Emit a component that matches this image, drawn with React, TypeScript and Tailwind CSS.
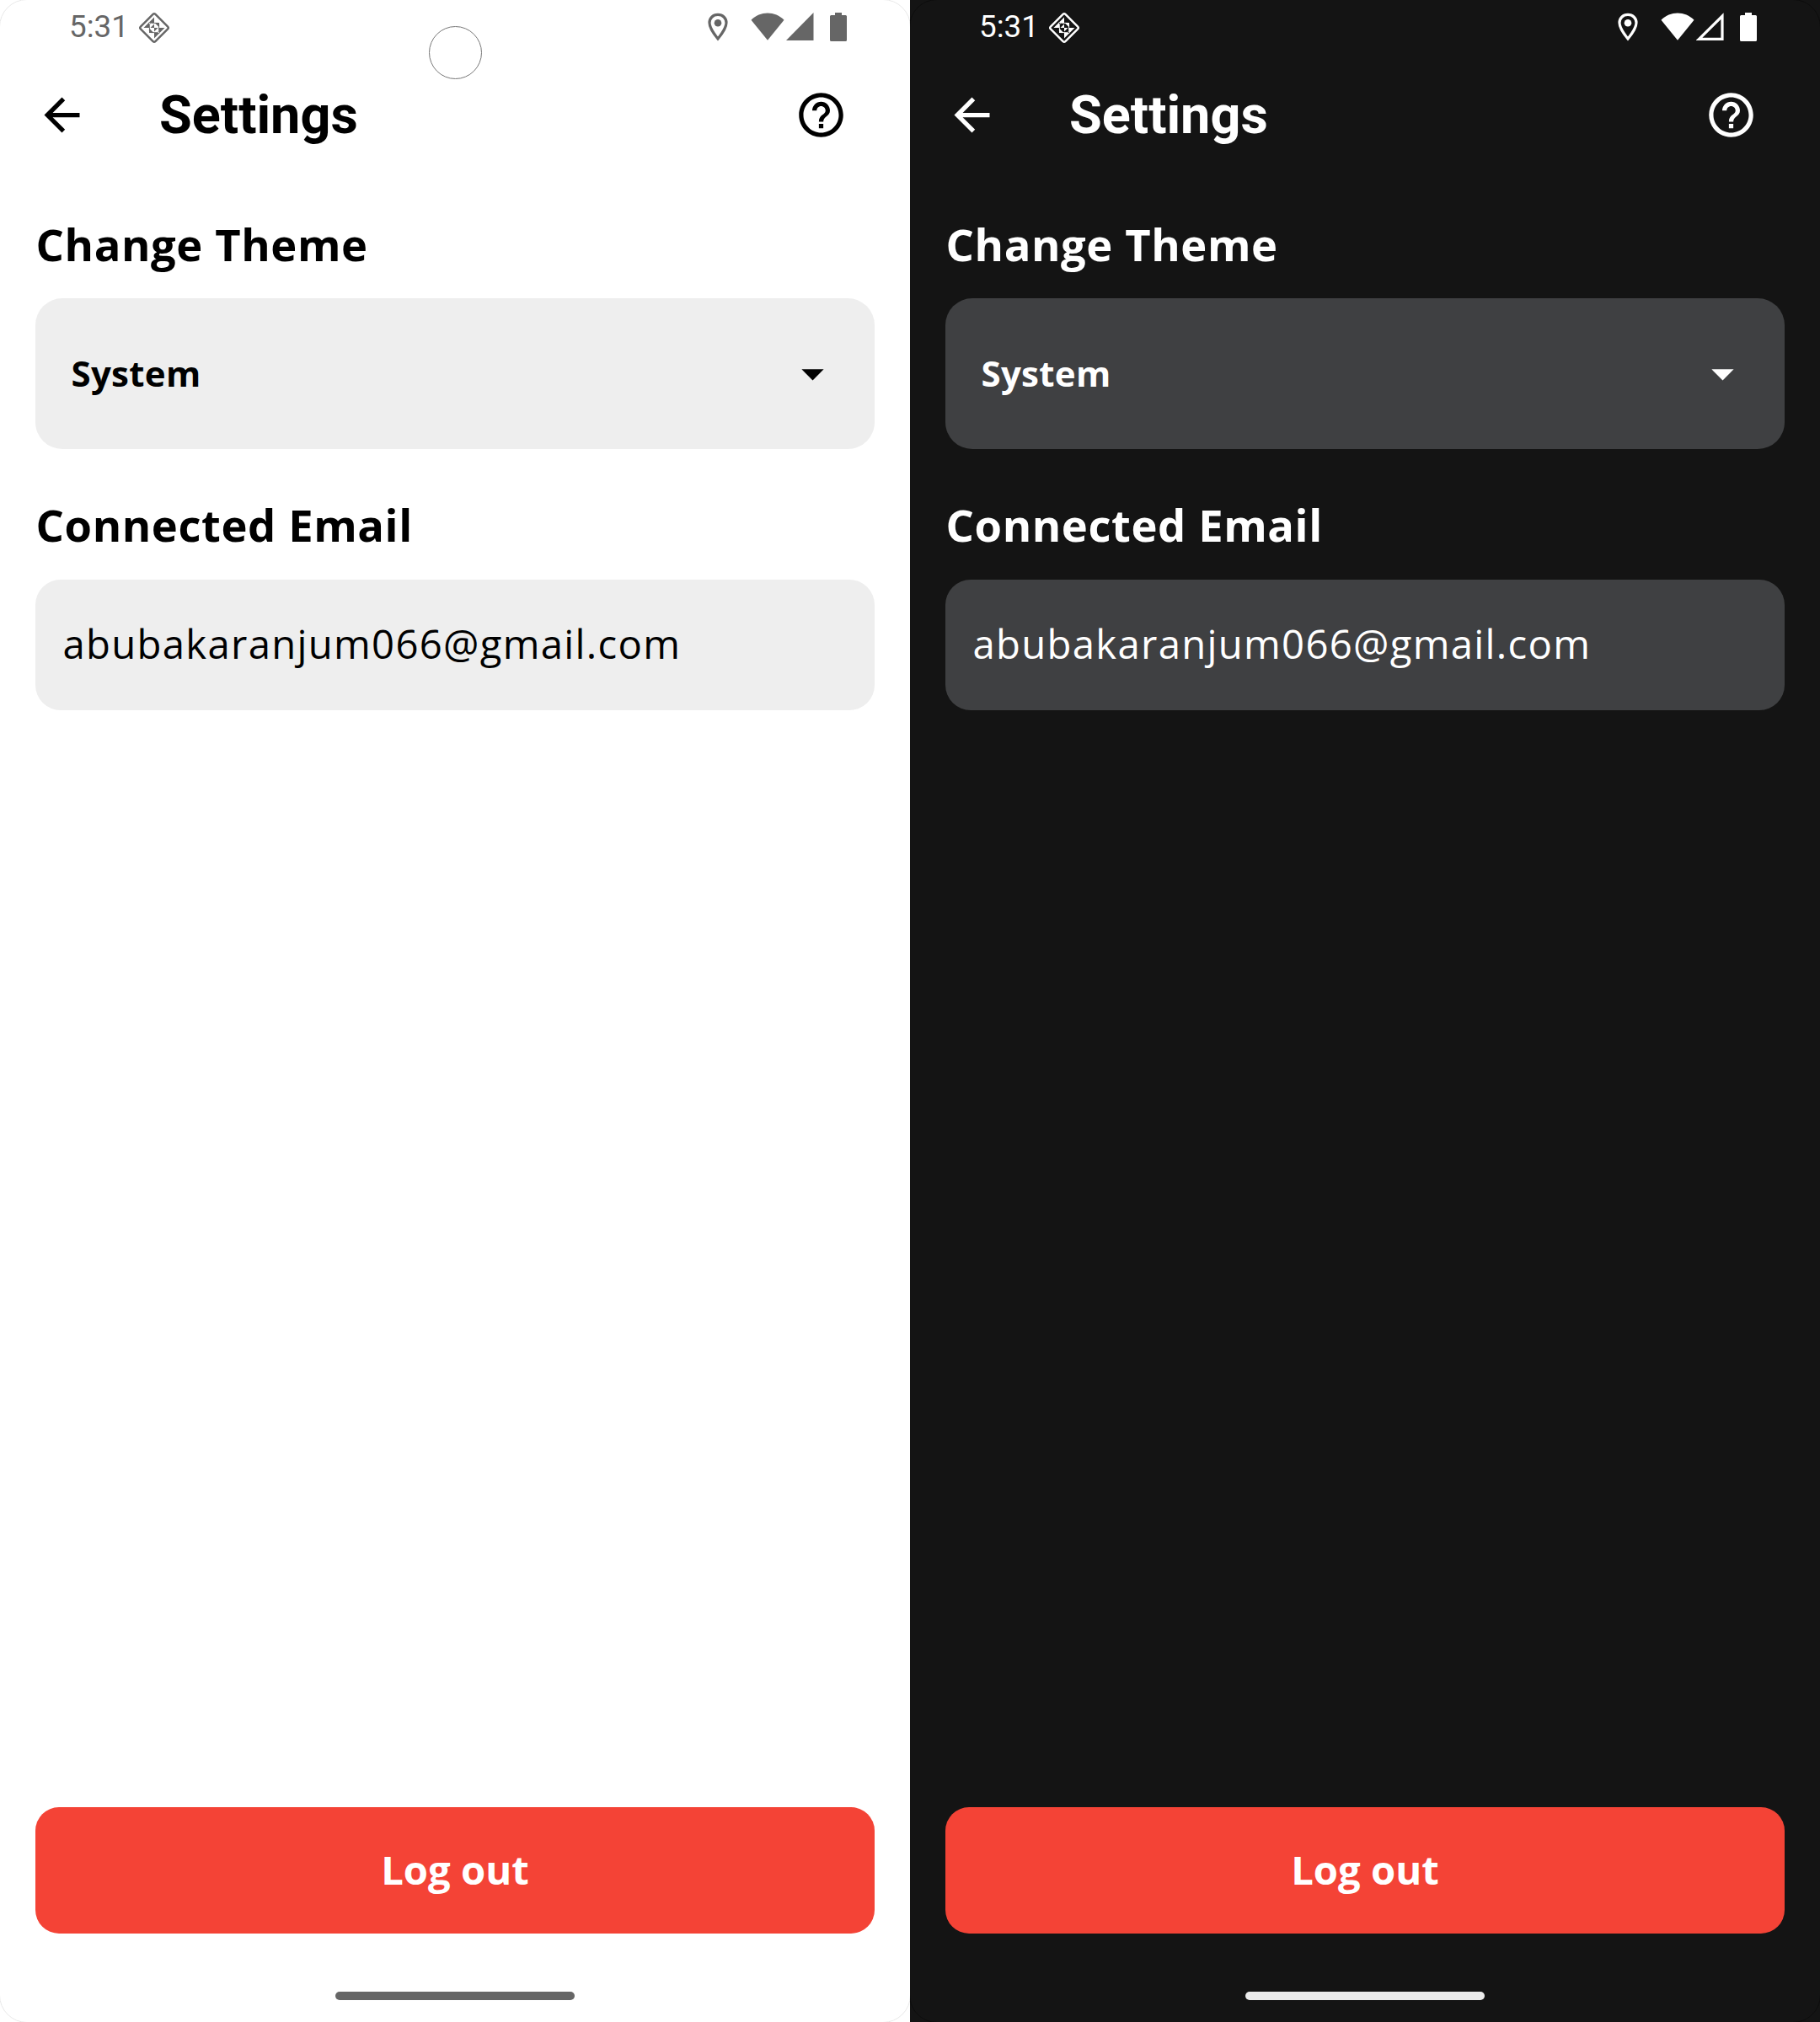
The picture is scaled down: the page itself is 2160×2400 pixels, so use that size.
import { useState } from "react";

type Theme = "light" | "dark";

function DebugIcon() {
  return (
    <svg viewBox="0 0 38 38" className="h-[38px] w-[38px]" fill="none">
      <rect x="6.600" y="6.600" width="24.800" height="24.800" rx="2" transform="rotate(45 19 19)" stroke="currentColor" strokeWidth="2.400" />
      <g fill="currentColor">
        <path d="M19 6.500V13H12.500Z" />
        <path d="M19 31.500V25H25.500Z" />
        <path d="M6.500 19H13V12.500Z" />
        <path d="M31.500 19H25V25.500Z" />
        <path d="M19.500 13H25V18.500Z" />
        <path d="M13 19.500V25H18.500Z" />
        <path d="M19 19H14.500L19 14.500Z" />
        <path d="M19 19H23.500L19 23.500Z" />
      </g>
      <rect x="13.400" y="13.400" width="11.200" height="11.200" rx="2" stroke="currentColor" strokeWidth="0.900" />
    </svg>
  );
}

function LocationIcon() {
  return (
    <svg viewBox="0 0 24 34" className="h-[34px] w-[24px]" fill="none">
      <path d="M12 2.400C6 2.400 2 6.800 2 12C2 19 12 31 12 31C12 31 22 19 22 12C22 6.800 18 2.400 12 2.400Z" stroke="currentColor" strokeWidth="3.200" />
      <circle cx="12" cy="12.200" r="4.300" fill="currentColor" />
    </svg>
  );
}

function StatusBar({ theme }: { theme: Theme }) {
  return (
    <div className={"flex h-[63px] items-start pl-[82px] " + (theme === "light" ? "text-[#666666]" : "text-white")}>
      <span className="mt-[10px] w-[72px] font-[Roboto] text-[36.750px] leading-[43px]">5:31</span>
      <div className="ml-[10px] mt-[13.500px]">
        <DebugIcon />
      </div>
      <div className="mt-[15px] flex pl-[638px]">
        <LocationIcon />
        <svg viewBox="0 0 40 33" className="ml-[26.500px] h-[33px] w-[40px]" fill="currentColor">
          <path d="M0.500 8.800C11-2.200 29-2.200 39.500 8.800L20 32.800Z" />
        </svg>
        <svg viewBox="0 0 33 33" className="ml-[2.500px] h-[33px] w-[33px]">
          {theme === "light" ? (
            <path d="M0 33L32.500 0V33Z" fill="currentColor" />
          ) : (
            <path d="M3.500 31.300L31 4V31.300Z" fill="none" stroke="currentColor" strokeWidth="3.200" />
          )}
        </svg>
        <svg viewBox="0 0 20 34" className="ml-[19px] h-[34px] w-[20px]" fill="currentColor">
          <path d="M6 0H14V3H18.500Q20 3 20 4.500V32.500Q20 34 18.500 34H1.500Q0 34 0 32.500V4.500Q0 3 1.500 3H6Z" />
        </svg>
      </div>
    </div>
  );
}

function Phone({ theme }: { theme: Theme }) {
  const [email] = useState("abubakaranjum066@gmail.com");
  const light = theme === "light";
  const card = light ? "bg-[#eeeeee]" : "bg-[#3f4042]";
  return (
    <section className={"relative flex h-[2400px] w-[1080px] flex-col overflow-hidden " + (light ? "bg-white text-black" : "bg-[#141414] text-white")}>
      {/* display corner outline; the straight edges fall outside the clipped area */}
      <div className={"pointer-events-none absolute -inset-px rounded-[33px] border " + (light ? "border-[#e9e9e9]" : "border-[#0d0d0d]")} />
      {/* front camera cutout */}
      {light && <div className="absolute left-[509px] top-[31px] h-[63px] w-[63px] rounded-full border border-[#777777]" />}
      <StatusBar theme={theme} />
      <header className="flex h-[147px] items-center pl-[42px] pr-[74px]">
        <svg viewBox="0 0 24 24" className="h-[63px] w-[63px]" fill="currentColor">
          <path d="M20 11H7.830l5.590-5.590L12 4l-8 8 8 8 1.410-1.410L7.830 13H20v-2z" />
        </svg>
        <h1 className="ml-[84px] flex-1 font-[Roboto] text-[63px] font-bold leading-[74px]">Settings</h1>
        <svg viewBox="0 0 24 24" className="h-[63px] w-[63px]" fill="currentColor">
          <path d="M11 18h2v-2h-2v2zm1-16C6.480 2 2 6.480 2 12s4.480 10 10 10 10-4.480 10-10S17.520 2 12 2zm0 18c-4.410 0-8-3.590-8-8s3.590-8 8-8 8 3.590 8 8-3.590 8-8 8zm0-14c-2.210 0-4 1.790-4 4h2c0-1.100.9-2 2-2s2 .9 2 2c0 2-3 1.750-3 5h2c0-2.250 3-2.500 3-5 0-2.210-1.790-4-4-4z" />
        </svg>
      </header>
      <main className="flex flex-1 flex-col px-[42px] pt-[44px] font-['Open_Sans']">
        <h2 className="h-[72px] whitespace-nowrap pl-[0.500px] text-[52.500px] font-bold leading-[72px] tracking-[0.600px]">Change Theme</h2>
        <button className={"mt-[28px] flex h-[179px] items-center justify-between rounded-[32px] px-[42px] text-left " + card}>
          <span className="pb-[2px] pl-[0.500px] text-[42px] font-bold leading-[57px] tracking-[0.300px]">System</span>
          <svg viewBox="0 0 24 24" className="h-[63px] w-[63px]" fill="currentColor">
            <path d="M7 10l5 5 5-5z" />
          </svg>
        </button>
        <h2 className="mt-[54px] h-[72px] whitespace-nowrap pl-[0.500px] text-[52.500px] font-bold leading-[72px] tracking-[0.600px]">Connected Email</h2>
        <div className={"mt-[29px] flex h-[155px] items-center rounded-[30px] px-[32px] " + card}>
          <span className="whitespace-nowrap pb-[4px] pl-[0.500px] text-[47.250px] leading-[64px] tracking-[1.310px]">{email}</span>
        </div>
        <button className="mb-[69px] mt-auto h-[150px] rounded-[28px] bg-[#f44336] pb-[2px] text-center text-[47.250px] font-bold leading-[148px] text-white">
          Log out
        </button>
      </main>
      <div className={"mb-[26px] h-[10px] w-[284px] self-center rounded-full " + (light ? "bg-[#666666]" : "bg-[#ececec]")} />
    </section>
  );
}

export default function App() {
  return (
    <div className="flex h-[2400px] w-[2160px] bg-white">
      <Phone theme="light" />
      <Phone theme="dark" />
    </div>
  );
}
